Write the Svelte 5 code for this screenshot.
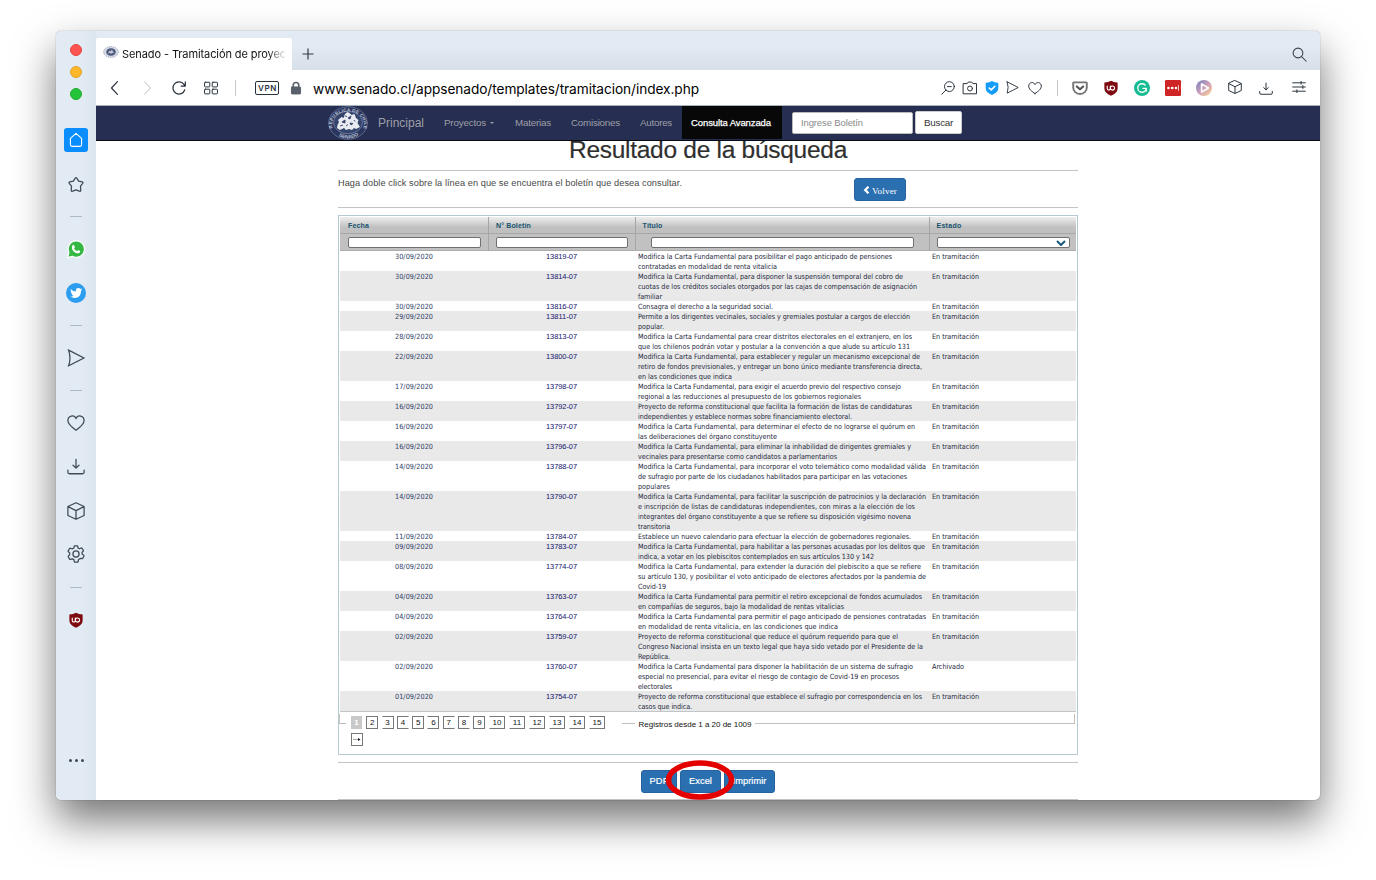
<script>
  const rows = [
    ['30/09/2020', '13819-07', [['Modifica la Carta Fundamental para posibilitar el pago anticipado de pensiones', 254], ['contratadas en modalidad de renta vitalicia', 139]]],
    ['30/09/2020', '13814-07', [['Modifica la Carta Fundamental, para disponer la suspensión temporal del cobro de', 265], ['cuotas de los créditos sociales otorgados por las cajas de compensación de asignación', 279], ['familiar', 24]]],
    ['30/09/2020', '13816-07', [['Consagra el derecho a la seguridad social.', 135]]],
    ['29/09/2020', '13811-07', [['Permite a los dirigentes vecinales, sociales y gremiales postular a cargos de elección', 272], ['popular.', 26]]],
    ['28/09/2020', '13813-07', [['Modifica la Carta Fundamental para crear distritos electorales en el extranjero, en los', 274], ['que los chilenos podrán votar y postular a la convención a que alude su artículo 131', 272]]],
    ['22/09/2020', '13800-07', [['Modifica la Carta Fundamental, para establecer y regular un mecanismo excepcional de', 282], ['retiro de fondos previsionales, y entregar un bono único mediante transferencia directa,', 284], ['en las condiciones que indica', 94]]],
    ['17/09/2020', '13798-07', [['Modifica la Carta Fundamental, para exigir el acuerdo previo del respectivo consejo', 263], ['regional a las reducciones al presupuesto de los gobiernos regionales', 223]]],
    ['16/09/2020', '13792-07', [['Proyecto de reforma constitucional que facilita la formación de listas de candidaturas', 274], ['independientes y establece normas sobre financiamiento electoral.', 214]]],
    ['16/09/2020', '13797-07', [['Modifica la Carta Fundamental, para determinar el efecto de no lograrse el quórum en', 277], ['las deliberaciones del órgano constituyente', 139]]],
    ['16/09/2020', '13796-07', [['Modifica la Carta Fundamental, para eliminar la inhabilidad de dirigentes gremiales y', 273], ['vecinales para presentarse como candidatos a parlamentarios', 199]]],
    ['14/09/2020', '13788-07', [['Modifica la Carta Fundamental, para incorporar el voto telemático como modalidad válida', 288], ['de sufragio por parte de los ciudadanos habilitados para participar en las votaciones', 269], ['populares', 32]]],
    ['14/09/2020', '13790-07', [['Modifica la Carta Fundamental, para facilitar la suscripción de patrocinios y la declaración', 288], ['e inscripción de listas de candidaturas independientes, con miras a la elección de los', 277], ['integrantes del órgano constituyente a que se refiere su disposición vigésimo novena', 273], ['transitoria', 32]]],
    ['11/09/2020', '13784-07', [['Establece un nuevo calendario para efectuar la elección de gobernadores regionales.', 273]]],
    ['09/09/2020', '13783-07', [['Modifica la Carta Fundamental, para habilitar a las personas acusadas por los delitos que', 287], ['indica, a votar en los plebiscitos contemplados en sus artículos 130 y 142', 236]]],
    ['08/09/2020', '13774-07', [['Modifica la Carta Fundamental, para extender la duración del plebiscito a que se refiere', 283], ['su artículo 130, y posibilitar el voto anticipado de electores afectados por la pandemia de', 288], ['Covid-19', 28]]],
    ['04/09/2020', '13763-07', [['Modifica la Carta Fundamental para permitir el retiro excepcional de fondos acumulados', 284], ['en compañías de seguros, bajo la modalidad de rentas vitalicias', 206]]],
    ['04/09/2020', '13764-07', [['Modifica la Carta Fundamental para permitir el pago anticipado de pensiones contratadas', 288], ['en modalidad de renta vitalicia, en las condiciones que indica', 200]]],
    ['02/09/2020', '13759-07', [['Proyecto de reforma constitucional que reduce el quórum requerido para que el', 260], ['Congreso Nacional insista en un texto legal que haya sido vetado por el Presidente de la', 285], ['República.', 32]]],
    ['02/09/2020', '13760-07', [['Modifica la Carta Fundamental para disponer la habilitación de un sistema de sufragio', 275], ['especial no presencial, para evitar el riesgo de contagio de Covid-19 en procesos', 261], ['electorales', 34]], 'Archivado'],
    ['01/09/2020', '13754-07', [['Proyecto de reforma constitucional que establece el sufragio por correspondencia en los', 284], ['casos que indica.', 54]]]
  ];
  const pages = [[2, 'l r'], [3, 'r'], [4, 'l'], [5, 'l r'], [6, 'r'], [7, 'l'], [8, 'l'], [9, 'l r'], [10, 'r wide'], [11, 'r wide'], [12, 'r wide'], [13, 'r wide'], [14, 'r wide'], [15, 'r wide']];
  const side = ['home', 'star', '-', 'whatsapp', 'twitter', '-', 'send', '-', 'heart', 'download', 'cube', 'gear', '-', 'ublock'];
  const tools = ['zoom', 'camera', 'shield', 'send', 'heart'];
  const extensions = ['pocket', 'ublock', 'grammar', 'dots', 'play', 'cube', 'download', 'sliders'];

  // Tracks the text so that it spans the given width.
  function fit(node, width) {
    const natural = node.getBoundingClientRect().width;
    node.style.letterSpacing = (width - natural) / node.textContent.length + 'px';
  }
</script>

{#snippet icon(name)}
  <svg class="ic {name}" viewBox="0 0 20 20" fill="none" stroke="currentColor" stroke-width="1.400" stroke-linejoin="round" stroke-linecap="round">
    {#if name === 'home'}
      <path d="M3 8 10 1.800l7 6.200v8a1.900 1.900 0 0 1-1.900 1.900H4.900A1.900 1.900 0 0 1 3 16z" />
    {:else if name === 'star'}
      <path d="M9.100 2.300q.9-1.100 1.800 0l2 3.400 4 .9q1.300.5.6 1.600l-2.500 3.100.3 4.700q-.2 1.200-1.500.9L10 15.500l-3.800 1.400q-1.300.3-1.500-.9l.3-4.700-2.500-3.100q-.7-1.100.6-1.600l4-.9z" />
    {:else if name === 'send'}
      <path d="M1.800 1.300 18.800 10 1.800 18.700Q4.800 10 1.800 1.300z" stroke-linejoin="miter" />
    {:else if name === 'heart'}
      <path d="M10 18C5 14.500 1 11.500 1 7.300c0-5.500 7-7 9-2.200 2-4.800 9-3.300 9 2.200 0 4.200-4 7.200-9 10.700z" />
    {:else if name === 'download'}
      <path d="M10 1.500v9.500M6.700 8l3.300 3.200L13.300 8M1 13.500v2.300q0 1.700 1.700 1.700h14.600q1.700 0 1.700-1.700v-2.300" />
    {:else if name === 'cube'}
      <path d="m10 .8 9 4.200v10l-9 4.200L1 15V5zM1.200 5.200 10 9.600l8.800-4.400M10 9.600v9.400" />
    {:else if name === 'gear'}
      <circle cx="10" cy="10" r="3.400" />
      <path d="M8.500.9h3q.4 0 .4.500l.3 2 1.600.8 1.900-.9q.5-.2.8.2l1.700 2.400q.3.400-.1.800l-1.400 1.500.1 1.800 1.800 1.300q.4.300.2.800l-1.200 2.700q-.2.500-.7.400l-2.300-.2-1.900 1.300-.3 2.300q-.1.500-.5.500h-3.200q-.5 0-.6-.5l-.4-2.300-1.800-.9-2.200.6q-.5.100-.8-.3l-1.500-2.600q-.2-.5.100-.8l1.600-1.600-.1-1.900-1.600-1.500q-.4-.3-.1-.8l1.600-2.600q.3-.4.8-.3l2.200.7 1.700-.9.400-2q.1-.5.500-.5z" />
    {:else if name === 'whatsapp'}
      <path d="M.7 19.500 2.100 14A9.100 9.100 0 1 1 6 18.100z" fill="#35b743" stroke="#fff" stroke-width="1.400" />
      <path d="M6 6.200q1.100-1.900 2 0l.8 1.900-.9 1.300q1.100 2.200 3.300 3l1.300-1.300 2.200 1.200q.1 2.500-2.500 2.600Q6 13.800 5.400 8.500z" fill="#fff" stroke="none" />
    {:else if name === 'twitter'}
      <circle cx="10" cy="10" r="10" fill="#2d9df0" stroke="none" />
      <path d="M4.700 5.900q2.300 2.500 5.200 2.500-.3-3.300 2.600-3.300 1.200 0 1.900.8l1.600-.6-1 1.500 1.300-.3-1.300 1.400q0 6.500-6.300 7-2.700 0-4.500-1.100 2 .1 3.500-1.100-1.700-.2-2.200-1.700l1-.1q-1.800-.6-1.900-2.500l1 .3Q4.100 7.600 4.700 5.900z" fill="#fff" stroke="none" />
    {:else if name === 'ublock'}
      <path d="M10 .8q4 2.400 8.300 2.200v7.700q0 5.300-8.300 9-8.300-3.700-8.300-9V3q4.300.2 8.300-2.200z" fill="#7d0b10" stroke="none" />
      <path d="M5.300 7.500v3.200q0 1.900 1.900 1.900t1.900-1.900V7.500M9.100 10.200q0-2.700 2.400-2.700h.6q2.400.2 2.400 2.600 0 2.500-2.700 2.500-2.500 0-2.700-2.400" stroke="#fff" />
    {:else if name === 'search'}
      <circle cx="8" cy="8" r="6.500" /><path d="m12.800 12.800 6.200 6.200" />
    {:else if name === 'zoom'}
      <circle cx="12" cy="8" r="7" /><path d="M7 13 1 19M9.300 8h5.400" />
    {:else if name === 'camera'}
      <path d="M.7 3.700h5.300l1.500-2.200h5L14 3.700h5.300v14.600H.7z" /><circle cx="10" cy="10.700" r="3.500" />
    {:else if name === 'shield'}
      <path d="M10 0q4.500 2.900 9 2.500v8q0 5.700-9 9.500-9-3.800-9-9.500v-8Q5.500 2.900 10 0z" fill="#149cf8" stroke="none" /><path d="m6 10 2.900 2.700 5.200-5.200" stroke="#fff" stroke-width="2.300" />
    {:else if name === 'pocket'}
      <path d="M2.300 3h15.400q.8 0 .8.800v5.700a8.500 8 0 0 1-17 0V3.800q0-.8.800-.8z" stroke="#747474" stroke-width="2.400" /><path d="m6 8 4 3.700L14 8" stroke="#555" stroke-width="2.600" />
    {:else if name === 'grammar'}
      <circle cx="10" cy="10" r="10" fill="#18bc93" stroke="none" /><path d="M14 6.200Q12.300 4.700 10 4.700a5.300 5.300 0 1 0 5.300 5.800h-4M15.300 10.500v3.300" stroke="#fff" stroke-width="1.700" />
    {:else if name === 'dots'}
      <rect width="20" height="20" rx="1.500" fill="#d02525" stroke="none" /><g fill="#fff" stroke="none"><circle cx="4.300" cy="10" r="1.700" /><circle cx="9" cy="10" r="1.700" /><circle cx="13.700" cy="10" r="1.700" /><path d="M16.500 6.500h.9v7h-.9z" /></g>
    {:else if name === 'play'}
      <defs><linearGradient id="playfill" x2="1" y2="1"><stop stop-color="#6c7ebd" /><stop offset=".55" stop-color="#d5a2b7" /><stop offset="1" stop-color="#f9d98f" /></linearGradient></defs>
      <circle cx="10" cy="10" r="10" fill="url(#playfill)" stroke="none" /><path d="M7 4.800v10.400l8.500-5.200z" stroke="#fff" stroke-width="2" />
    {:else if name === 'sliders'}
      <path d="M1 4h18M1 10h18M1 16h18M13 2v4M15.500 8v4M7 14v4" />
    {:else if name === 'back'}
      <path d="M13.500 1 5 10l8.500 9" stroke-width="1.700" />
    {:else if name === 'forward'}
      <path d="m6.500 1 8.500 9-8.500 9" />
    {:else if name === 'reload'}
      <path d="M18.300 12.500A8.700 8.700 0 1 1 17 4.700l1.500 2M19 1.300v6h-6" stroke-width="1.700" />
    {:else if name === 'grid'}
      <rect x=".8" y="1.800" width="7.500" height="6.700" rx="1" /><rect x="11.700" y="1.800" width="7.500" height="6.700" rx="1" /><rect x=".8" y="11.700" width="7.500" height="6.700" rx="1" /><rect x="11.700" y="11.700" width="7.500" height="6.700" rx="1" />
    {:else if name === 'lock'}
      <rect x="3.500" y="8.500" width="13" height="10" rx="1" fill="currentColor" /><path d="M6 9V6q0-4 4-4t4 4v3" stroke-width="2.200" />
    {/if}
  </svg>
{/snippet}

{#snippet crest()}
  <path d="m9.500 19 1.500-3-1-2 3.500-3 2 1 1.500-4 2.500-2 2 1 2 2 3-1 1.500 4 2.500 2-1 3 2.500 4-4 2-2-1-2 2-3-1-3 1-2-2-4 2-3-2z" fill="#e8ebf1" />
  <path d="m14 16 3-2v3zM20 12l3-2-1 3zM22 17l3 .500-2 1.500zM17 10l2 .5M12 20l3-1M18 20l2-1.500M26 14l1 1.500" fill="#35446c" stroke="#35446c" stroke-width=".9" />
{/snippet}

{#snippet seal()}
  <svg class="seal" viewBox="0 0 40 34">
    <defs>
      <path id="arcTop" d="M5 23A16 13 0 1 1 35 23" />
      <path id="arcBottom" d="M7 27.500Q20 37.500 33 27.500" />
    </defs>
    <ellipse cx="20" cy="17" rx="19.300" ry="16.300" fill="#2a365f" stroke="#7382a3" stroke-width=".7" />
    <ellipse cx="20" cy="16.500" rx="14.500" ry="11.300" fill="#35446c" stroke="#8e9bb7" stroke-width=".6" />
    <text font-size="4.600" font-weight="700" fill="#bcc5d6"><textPath href="#arcTop" startOffset="1" textLength="53">REPUBLICA DE CHILE</textPath></text>
    <text font-size="4.800" font-weight="700" fill="#bcc5d6"><textPath href="#arcBottom" startOffset="4.500" textLength="21">SENADO</textPath></text>
    {@render crest()}
  </svg>
{/snippet}

<div class="window">
  <aside>
    <div class="lights"><i class="red"></i><i class="amber"></i><i class="green"></i></div>
    {#each side as s}
      {#if s === '-'}<div class="sep"><i></i></div>{:else}<div class="item {s}-item">{@render icon(s)}</div>{/if}
    {/each}
    <div class="more"><i></i><i></i><i></i></div>
  </aside>
  <div class="main">
    <div class="tabs">
      <div class="tab">
        <svg class="fav" viewBox="0 0 40 30"><ellipse cx="20" cy="15" rx="18.500" ry="13.500" fill="#d5dae4" stroke="#9ba5b8" stroke-width="2.500" stroke-dasharray="3 2" /><ellipse cx="20" cy="15" rx="12" ry="9.500" fill="#4a587b" /><path d="m12 19 4-8 3 3 3-5 6 10-5-2-3 3-3-3z" fill="#c4cad8" /></svg>
        <span class="title"><span use:fit={164}>Senado - Tramitación de proyec</span></span>
      </div>
      <svg class="plus" viewBox="0 0 12 12" stroke="#333b45" stroke-width="1.200"><path d="M6 .5v11M.5 6h11" /></svg>
      <div class="search-cell">{@render icon('search')}</div>
    </div>
    <div class="toolbar">
      {#each ['back', 'forward', 'reload', 'grid'] as n}<div class="nav-cell">{@render icon(n)}</div>{/each}
      <i class="rule"></i>
      <span class="vpn">VPN</span>
      {@render icon('lock')}
      <span class="url"><span use:fit={386}>www.senado.cl/appsenado/templates/tramitacion/index.php</span></span>
      <div class="tools">{#each tools as n}<div>{@render icon(n)}</div>{/each}</div>
      <i class="rule second"></i>
      <div class="exts">{#each extensions as n}<div>{@render icon(n)}</div>{/each}</div>
    </div>
    <nav>
      {@render seal()}
      <span class="brand"><span use:fit={46}>Principal</span></span>
      <span class="link proyectos"><span use:fit={42}>Proyectos</span><i class="caret"></i></span>
      <span class="link"><span use:fit={36}>Materias</span></span>
      <span class="link"><span use:fit={49}>Comisiones</span></span>
      <span class="link"><span use:fit={32}>Autores</span></span>
      <span class="active"><span use:fit={80}>Consulta Avanzada</span></span>
      <span class="field"><span use:fit={62}>Ingrese Boletín</span></span>
      <span class="go"><span use:fit={29}>Buscar</span></span>
    </nav>
    <div class="page">
      <h1><span use:fit={278}>Resultado de la búsqueda</span></h1>
      <div class="hint">
        <p><span use:fit={344}>Haga doble click sobre la línea en que se encuentra el boletín que desea consultar.</span></p>
        <span class="btn back-btn"><svg viewBox="0 0 7 8" width="7" height="8"><path d="M5.500 .7 2.200 4l3.300 3.300" fill="none" stroke="#fff" stroke-width="2.300" /></svg><span use:fit={25}>Volver</span></span>
      </div>
      <div class="grid-box">
        <div class="cols head"><span><b use:fit={21}>Fecha</b></span><span><b use:fit={35}>N° Boletín</b></span><span><b use:fit={20}>Título</b></span><span><b use:fit={25}>Estado</b></span></div>
        <div class="cols filters">
          <span><i></i></span><span><i></i></span><span class="wide-filter"><i></i></span>
          <span><i class="select"><svg viewBox="0 0 10 6" width="10" height="6"><path d="m1 1 4 4 4-4" fill="none" stroke="#165a7c" stroke-width="2" /></svg></i></span>
        </div>
        <div class="body">
          {#each rows as [date, code, lines, state]}
            <div class="cols row">
              <span class="mid"><span use:fit={38}>{date}</span></span>
              <span class="mid code"><span use:fit={31}>{code}</span></span>
              <span class="text">{#each lines as [line, w]}<span class="line"><span use:fit={w}>{line}</span></span>{/each}</span>
              <span class="state"><span use:fit={state ? 32 : 47}>{state ?? 'En tramitación'}</span></span>
            </div>
          {/each}
        </div>
        <div class="footer">
          <div class="edge-left"></div>
          <div class="pager"><span class="pg current">1</span>{#each pages as [n, c]}<span class="pg {c}">{n}</span>{/each}<span class="pg l r next"><svg width="8" height="5" viewBox="0 0 8 5"><path d="M0 2.500h6" stroke="#aaa" /><path d="m5 1 2.500 1.500L5 4z" fill="#112" /></svg></span></div>
          <div class="dash"></div>
          <div class="count"><span use:fit={113}>Registros desde 1 a 20 de 1009</span></div>
          <div class="edge-right"></div>
        </div>
      </div>
      <div class="actions">
        <span class="btn pdf"><span use:fit={19}>PDF</span></span>
        <span class="btn excel"><span use:fit={23}>Excel</span>
          <svg class="mark" viewBox="0 0 70 42"><ellipse cx="35" cy="21" rx="31.500" ry="17" fill="none" stroke="#e50000" stroke-width="5.500" /></svg>
        </span>
        <span class="btn print"><span use:fit={34}>Imprimir</span></span>
      </div>
    </div>
  </div>
</div>

<style>
  :global(body) { background: #fff; overflow: hidden; }
  * { box-sizing: border-box; }
  .window { width: 1264px; height: 769px; margin: 31px 0 80px 56px; display: flex; border-radius: 5px; background: #fff; box-shadow: 0 0 1px rgba(0,0,0,.6), 0 20px 42px rgba(0,0,0,.55); font-family: "Liberation Sans", Arial, sans-serif; white-space: nowrap; }
  span { white-space: nowrap; }
  .ic { display: block; width: 16px; height: 16px; overflow: visible; flex: none; }
  aside { width: 40px; flex: none; background: linear-gradient(90deg, #e2eaf3 65%, #dce6ef); border-radius: 5px 0 0 5px; display: flex; flex-direction: column; align-items: center; color: #3e4a57; }
  .lights { height: 87px; padding-top: 13px; display: flex; flex-direction: column; gap: 10px; flex: none; }
  .lights i { width: 12px; height: 12px; border-radius: 50%; }
  .red { background: #ff5350; border: 1px solid #e7473f; } .amber { background: #fdb72b; border: 1px solid #e2a02a; } .green { background: #24c43a; border: 1px solid #1fab30; }
  .item { height: 43.700px; display: flex; align-items: center; flex: none; }
  .item .ic { width: 18px; height: 18px; }
  .item.home-item .ic { width: 24px; height: 24px; padding: 4px; background: #0a8dff; color: #fff; border-radius: 3px; }
  .item.star-item { padding-top: 2px; }
  .item.twitter-item .ic { width: 20px; height: 20px; }
  .item.ublock-item .ic { width: 16px; height: 16px; }
  .sep { height: 21.700px; display: flex; align-items: center; flex: none; }
  .sep i { width: 12px; height: 1px; background: #aeb9c5; }
  .more { margin-top: auto; margin-bottom: 38px; display: flex; gap: 3px; }
  .more i { width: 3px; height: 3px; border-radius: 50%; background: #3e4a57; }
  .main { width: 1224px; display: flex; flex-direction: column; overflow: hidden; border-radius: 0 5px 5px 0; }
  .tabs { height: 39px; flex: none; background: linear-gradient(#e2eaf3 35%, #d7e0e9); display: flex; align-items: flex-end; }
  .tab { width: 196px; height: 32px; background: #fff; border-radius: 2px 2px 0 0; display: flex; align-items: center; padding-left: 7px; font: 11px Inter, sans-serif; color: #111; }
  .fav { width: 16px; height: 12px; margin-right: 3px; margin-top: -5px; flex: none; }
  .title { width: 166px; line-height: 16px; mask-image: linear-gradient(90deg, #000 88%, rgba(0,0,0,.1) 98%); }
  .title > span, .url > span { display: inline-block; }
  .plus { width: 12px; height: 12px; margin: 0 0 10px 10px; }
  .search-cell { margin: 0 13px 8px auto; color: #3b4149; }
  .search-cell .ic { width: 15px; height: 15px; }
  .toolbar { height: 36px; flex: none; display: flex; align-items: center; padding: 0 9px 0 3px; border-bottom: 1px solid #a9b5bd; color: #27313c; background: #fff; }
  .nav-cell { width: 32px; display: flex; justify-content: center; }
  .nav-cell:nth-child(2) { color: #b7bbc0; }
  .nav-cell .ic { width: 14px; height: 14px; }
  .rule { width: 1px; height: 16px; background: #c5c9cd; margin-left: 8px; }
  .vpn { margin-left: 19px; width: 24px; height: 14px; border: 1px solid #27313c; border-radius: 2px; font: 600 8px/12px Inter, sans-serif; letter-spacing: .7px; text-align: center; padding-left: 1px; }
  .ic.lock { margin-left: 10px; width: 14px; height: 14px; color: #57606b; }
  .url { margin-left: 10px; margin-top: 2px; font: 13.700px Inter, sans-serif; color: #000; }
  .tools { display: flex; margin-left: auto; }
  .tools div { width: 22px; display: flex; justify-content: center; }
  .tools .ic { width: 14px; height: 14px; }
  .tools div:nth-child(3) { width: 21px; } .tools div:nth-child(4) { width: 21px; } .tools div:first-child, .tools div:last-child { width: 23px; }
  .tools div:nth-child(4) .ic { width: 13px; height: 13px; }
  .rule.second { margin: 0 10px 0 11px; }
  .exts { display: flex; gap: 7px; }
  .exts div { width: 24px; display: flex; justify-content: center; }
  .exts div:last-child { margin-left: 2px; }
  .exts .ic { width: 16px; height: 16px; }
  .exts .cube, .exts .download, .exts .sliders { width: 14px; height: 14px; }
  .exts .download { margin-top: 2px; }
  nav { height: 35px; flex: none; background: #262e52; border-bottom: 1px solid #080a12; display: flex; align-items: center; padding-left: 232px; color: #9d9fa6; font-size: 9.800px; }
  nav .seal { width: 40px; height: 34px; flex: none; }
  nav > span { display: block; line-height: 14px; margin-top: -1px; flex: none; }
  nav .brand { font-size: 12px; width: 46px; margin-left: 10px; }
  .link { margin-left: 20px; }
  .link.proyectos { display: flex; align-items: center; width: 51px; margin-top: 0; }
  .caret { border: 2.500px solid transparent; border-top-color: #9d9fa6; border-bottom: 0; margin-left: 4px; }
  nav .active { background: #080808; color: #fff; width: 100px; height: 33px; line-height: 33px; margin: -1px 0 0 10px; padding-left: 9px; font-size: 9.500px; -webkit-text-stroke: .25px #fff; }
  nav .field { background: #fff; border: 1px solid #bbb; border-radius: 2px; width: 121px; height: 22px; line-height: 20px; margin: -1px 0 0 10px; padding-left: 8px; color: #8b8b8b; font-size: 9.500px; }
  nav .go { background: #fff; border: 1px solid #ccc; border-radius: 2px; width: 47px; height: 23px; line-height: 21px; margin: -1px 0 0 2px; padding-left: 8px; color: #333; }
  .page { width: 740px; margin-left: 242px; flex: 1; overflow: hidden; }
  h1 { margin: 0; height: 29px; font-weight: 400; font-size: 24.500px; line-height: 17px; text-align: center; color: #2f2f2f; -webkit-text-stroke: .2px #2f2f2f; }
  .hint { height: 38px; border-top: 1px solid #c4c4c4; border-bottom: 1px solid #c4c4c4; display: flex; color: #484848; }
  .hint p { margin: 5px 0 0; width: 516px; font-size: 9.200px; line-height: 14px; }
  .btn { display: flex; align-items: center; justify-content: center; background: #2a6fb0; border: 1px solid #2463a0; border-radius: 3px; color: #fff; height: 23px; font-size: 9.200px; }
  .back-btn { width: 52px; margin-top: 7px; gap: 2px; padding-top: 2px; font-family: "Liberation Serif", serif; }
  .back-btn svg { margin-top: -2px; }
  .grid-box { margin-top: 7px; height: 540px; border: 1px solid #b4cad2; padding: 1px; }
  .cols { display: grid; grid-template-columns: 148px 147px 294px 147px; }
  .head { height: 17px; background: linear-gradient(#eee, #c0c0c0 65%); border-bottom: 1px solid #a7a7a7; font-size: 7px; line-height: 16px; color: #17536f; }
  .head > span { padding-left: 7px; border-left: 1px solid #a5a5a5; }
  .head > span:first-child, .filters > span:first-child { border-left-color: transparent; }
  .head > span:nth-child(3), .head > span:nth-child(4) { padding-left: 6.500px; }
  .head b { line-height: 17px; display: inline-block; }
  .filters { height: 17px; background: #c1c1c1; border-bottom: 1px solid #adadad; }
  .filters > span { border-left: 1px solid #a5a5a5; padding: 3px 7px 0 7px; }
  .filters > span:last-child { padding-right: 6px; }
  .filters > .wide-filter { padding: 3px 15px 0; }
  .filters i { display: block; height: 11px; background: #fff; border: 1px solid #707070; border-radius: 2px; }
  .filters .select { display: flex; justify-content: flex-end; align-items: center; padding-right: 3px; }
  .body { border-bottom: 1px solid #bfc5c8; font: 7.200px/10px "DejaVu Sans Condensed", "DejaVu Sans", sans-serif; font-stretch: condensed; color: #262a3d; }
  .row { padding-top: 1px; margin-bottom: -1px; }
  .row:nth-child(even) { background: linear-gradient(#e9e9e9, #e9e9e9) 0 0 / 100% calc(100% - 1px) no-repeat; }
  .row:last-child { margin-bottom: 0; height: 20px; background-size: 100% 100%; }
  .mid { text-align: center; line-height: 10px; color: #2d3b66; }
  .code { color: #14146c; font-family: "Liberation Sans", sans-serif; font-size: 7.500px; }
  .text { padding-left: 3px; display: block; }
  .line { display: block; height: 10px; }
  .state { padding-left: 3px; }
  .footer { display: flex; align-items: flex-start; font-size: 8px; color: #111; padding-top: 2px; }
  .edge-left { width: 7px; height: 10px; border-left: 1px solid #ccc8c0; border-bottom: 1px solid #bbb; margin-left: -1px; }
  .pager { width: 271px; padding: 2px 0 0 5px; display: flex; flex-wrap: wrap; gap: 4px 3.300px; }
  .pg { width: 12px; height: 13px; line-height: 11px; border: 1px solid #777; border-left-color: transparent; border-right-color: transparent; text-align: center; }
  .pg.l { border-left-color: #777; } .pg.r { border-right-color: #777; }
  .pg.wide { width: 16.700px; }
  .pg.current { background: #c9c9c9; border-color: #c9c9c9; color: #fff; font-weight: 700; width: 11px; margin-right: 1px; }
  .next { display: flex; align-items: center; justify-content: center; }
  .dash { width: 13px; height: 10px; border-bottom: 1px solid #c2c0b8; margin-left: 5px; }
  .count { margin-left: 3.500px; width: 116.500px; line-height: 10px; padding-top: 6px; }
  .edge-right { flex: 1; height: 10px; border-bottom: 1px solid #c2c0b8; border-right: 1px solid #c2c0b8; margin-right: 1px; }
  .actions { margin-top: 7px; height: 38px; border-top: 1px solid #c4c4c4; border-bottom: 1px solid #c4c4c4; display: flex; padding: 7px 0 0 303px; gap: 3px; -webkit-text-stroke: .2px #fff; }
  .actions .btn { padding-bottom: 2px; }
  .pdf { width: 36px; } .excel { width: 41px; position: relative; } .print { width: 51px; }
  .mark { position: absolute; width: 70px; height: 42px; left: -16px; top: -12px; z-index: 3; }
</style>
